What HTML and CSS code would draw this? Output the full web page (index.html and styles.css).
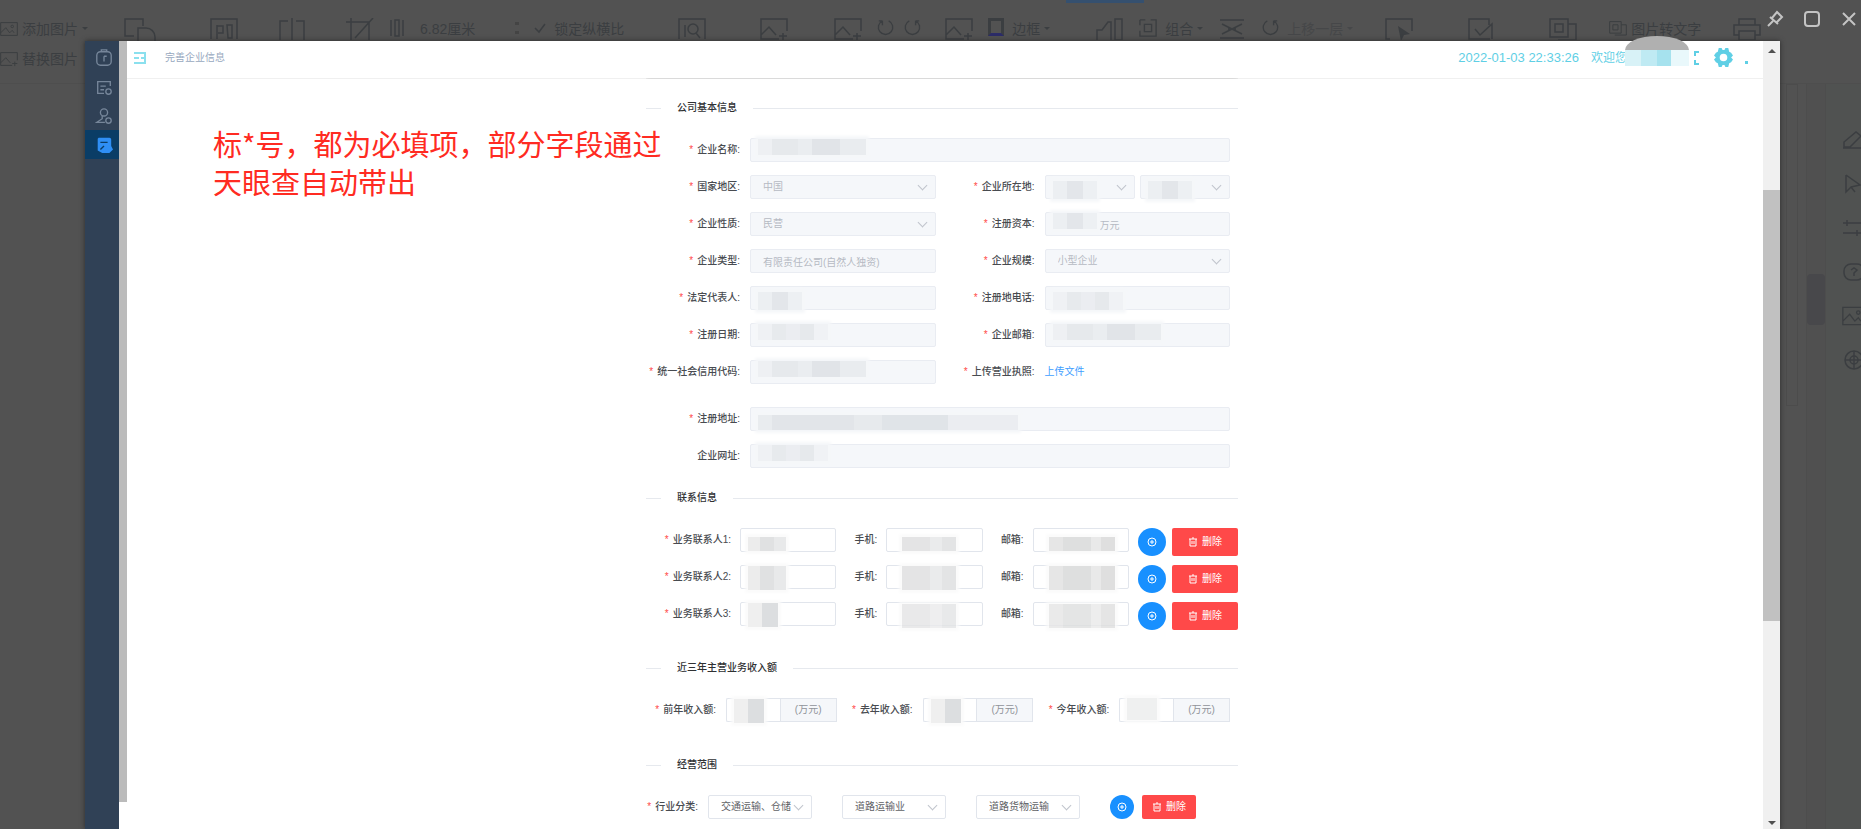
FILE: index.html
```html
<!DOCTYPE html>
<html lang="zh-CN">
<head>
<meta charset="utf-8">
<title>完善企业信息</title>
<link rel="stylesheet" href="styles.css">
</head>
<body>
<svg class="defs" aria-hidden="true">
  <symbol id="pic" viewBox="0 0 28 22"><path d="M1 1h26v20H1zM1 17l8-8 6 8 4-4 3 4"/><circle cx="19" cy="7" r="2"/></symbol>
  <symbol id="picplus" viewBox="0 0 28 22"><path d="M19 21H1V1h26v12M1 17l8-8 7 8M23 15v7M19 18h8"/></symbol>
  <symbol id="shape" viewBox="0 0 32 24"><path d="M10 18H1V1h18v7"/><path d="M14 24V10h8a9 9 0 0 1 9 9v5"/></symbol>
  <symbol id="fit" viewBox="0 0 28 22"><path d="M1 21V1h26v20M7 7v14M7 8h6v7H8M17 7h5v13h-4z"/></symbol>
  <symbol id="find" viewBox="0 0 28 22"><path d="M1 21V1h26v20"/><circle cx="15" cy="11" r="5"/><path d="M18 15l4 5M7 7v12"/></symbol>
  <symbol id="split" viewBox="0 0 28 22"><path d="M10 3H2v19M18 3h8v19M14 0v22"/></symbol>
  <symbol id="crop" viewBox="0 0 28 22"><path d="M5 0v22M0 4h23v18M27 0L9 20"/></symbol>
  <symbol id="bars" viewBox="0 0 16 18"><path d="M2 1v16M14 1v16M6 1h4v16H6z"/></symbol>
  <symbol id="check" viewBox="0 0 12 12"><path d="M1 6l4 4 6-8"/></symbol>
  <symbol id="rotl" viewBox="0 0 20 20"><path d="M13 2a8 8 0 1 1-7 0M6 2v5M2 2h4"/></symbol>
  <symbol id="rotr" viewBox="0 0 20 20"><path d="M7 2a8 8 0 1 0 7 0M14 2v5M18 2h-4"/></symbol>
  <symbol id="align" viewBox="0 0 28 22"><path d="M1 22V12h5l6-8h3v18M19 1h7v21h-7z"/></symbol>
  <symbol id="group" viewBox="0 0 20 20"><path d="M1 1h6M1 1v6M13 1h6v18H1v-6M6 6h8v8H6z"/></symbol>
  <symbol id="cursor" viewBox="0 0 28 22"><path d="M5 21H1V1h26v12"/><path class="solid" d="M13 8l12 8-6 1-3 6z"/></symbol>
  <symbol id="tick" viewBox="0 0 28 22"><path d="M23 21H2V1h20v6M8 11l5 6L25 6v15"/></symbol>
  <symbol id="layers" viewBox="0 0 28 22"><path d="M1 1h18v18H1zM19 6h8v16H9M6 6h8v8H6z"/></symbol>
  <symbol id="swap" viewBox="0 0 28 22"><path d="M2 2h24M2 20h24M4 6l20 10M24 6L4 16M10 11h8"/></symbol>
  <symbol id="print" viewBox="0 0 28 22"><path d="M6 7V1h16v6M6 17H1V7h26v10h-5M6 13h16v9H6z"/></symbol>
  <symbol id="doc" viewBox="0 0 20 20"><path d="M17 9V4H3v13h7M6 9h6M6 13h4"/><circle cx="15" cy="15" r="3"/></symbol>
  <symbol id="clip" viewBox="0 0 20 20"><rect x="2" y="3" width="16" height="15" rx="4"/><path d="M7 3V1h6v2M10 8v6M10 8h3"/></symbol>
  <symbol id="person" viewBox="0 0 20 20"><circle cx="10" cy="6" r="4"/><path d="M8 10v3l-6 4h9"/><circle cx="15" cy="15" r="3"/></symbol>
  <symbol id="docfill" viewBox="0 0 20 20"><path class="solid" d="M4 2h12a2 2 0 0 1 2 2v7l2 4-4 4h-8l-5-3V3z"/><path class="cut" d="M6 7h8M6 15l4-4"/></symbol>
  <symbol id="gear" viewBox="0 0 20 20"><path class="solid" fill-rule="evenodd" d="M5 0h3l1 2h2l1-2h3l1 4 2 1 2 3-2 2 2 2-2 3-2 1-1 4h-3l-1-2H9l-1 2H5l-1-4-2-1-2-3 2-2-2-2 2-3 2-1zM10 6a4 4 0 1 0 0 8 4 4 0 0 0 0-8z"/></symbol>
  <symbol id="trash" viewBox="0 0 10 10"><path d="M1 2h8M2 2v7h6V2M4 4v3M6 4v3M4 1h2"/></symbol>
  <symbol id="plus" viewBox="0 0 12 12"><circle cx="6" cy="6" r="4"/><path d="M6 4v4M4 6h4"/></symbol>
  <symbol id="pen" viewBox="0 0 24 20"><path d="M1 18h22M2 17v-5L14 2l5 4L8 17z"/></symbol>
  <symbol id="arrow" viewBox="0 0 24 20"><path d="M4 1v17l5-5 4 5M4 1l14 10-9 2"/></symbol>
  <symbol id="sliders" viewBox="0 0 24 20"><path d="M1 5h22M1 15h22M5 2v6M15 12v6"/></symbol>
  <symbol id="help" viewBox="0 0 24 20"><rect x="2" y="2" width="20" height="16" rx="7"/><path d="M9 8l3-2 3 2-3 3v3"/></symbol>
  <symbol id="web" viewBox="0 0 24 20"><circle cx="12" cy="10" r="9"/><circle cx="12" cy="10" r="4"/><path d="M3 10h18M12 1v18"/></symbol>
</svg>

<div class="desktop">
  <div class="ribbon">
    <div class="tab-marker"></div>
    <div class="stack">
      <span class="tool"><svg class="i18"><use href="#pic"/></svg>添加图片<i class="caret"></i></span>
      <span class="tool"><svg class="i18"><use href="#picplus"/></svg>替换图片</span>
    </div>
    <svg class="i32 s32"><use href="#shape"/></svg>
    <svg class="i28 s56"><use href="#fit"/></svg>
    <svg class="i28 s40"><use href="#split"/></svg>
    <svg class="i28 s40"><use href="#crop"/></svg>
    <svg class="i16 s16"><use href="#bars"/></svg>
    <span class="tool s16">6.82厘米</span>
    <span class="spinner s40"><i></i><i></i></span>
    <svg class="i12 s16"><use href="#check"/></svg>
    <span class="tool s8">锁定纵横比</span>
    <svg class="i28 s56"><use href="#find"/></svg>
    <svg class="i28 s56"><use href="#picplus"/></svg>
    <svg class="i28 s48"><use href="#picplus"/></svg>
    <svg class="i18 s16"><use href="#rotl"/></svg>
    <svg class="i18 s8"><use href="#rotr"/></svg>
    <svg class="i28 s24"><use href="#picplus"/></svg>
    <span class="border-icon s16"></span>
    <span class="tool s8">边框<i class="caret"></i></span>
    <svg class="i28 s48"><use href="#align"/></svg>
    <svg class="i18 s16"><use href="#group"/></svg>
    <span class="tool s8">组合<i class="caret"></i></span>
    <svg class="i28 s16"><use href="#swap"/></svg>
    <svg class="i18 s16"><use href="#rotr"/></svg>
    <span class="tool faint s8">上移一层<i class="caret"></i></span>
    <svg class="i28 s32"><use href="#cursor"/></svg>
    <svg class="i28 s56"><use href="#tick"/></svg>
    <svg class="i28 s56"><use href="#layers"/></svg>
    <svg class="i18 s32"><use href="#layers"/></svg>
    <span class="tool s4">图片转文字</span>
    <svg class="i28 s32"><use href="#print"/></svg>
  </div>
  <div class="workspace">
    <div class="doc-edge"></div>
    <div class="doc-scroll"><span class="doc-thumb"></span></div>
    <div class="rail">
      <svg><use href="#pen"/></svg><svg><use href="#arrow"/></svg><svg><use href="#sliders"/></svg>
      <svg><use href="#help"/></svg><svg><use href="#pic"/></svg><svg><use href="#web"/></svg>
    </div>
  </div>
</div>

<div class="viewer-controls">
  <button type="button" aria-label="固定"><svg viewBox="0 0 18 18"><path d="M2 16l5-5M4 7l8 7M6 8l5-6 5 5-5 5"/></svg></button>
  <button type="button" aria-label="最大化"><svg viewBox="0 0 18 18"><rect x="2" y="2" width="14" height="14" rx="3"/></svg></button>
  <button type="button" aria-label="关闭"><svg viewBox="0 0 18 18"><path d="M3 3l12 12M15 3L3 15"/></svg></button>
</div>

<div class="viewer">
  <nav class="side">
    <a href="#a" aria-label="首页"><svg><use href="#clip"/></svg></a>
    <a href="#b" aria-label="订单"><svg><use href="#doc"/></svg></a>
    <a href="#c" aria-label="用户"><svg><use href="#person"/></svg></a>
    <a href="#d" aria-label="企业" class="active"><svg><use href="#docfill"/></svg></a>
  </nav>
  <div class="strip"></div>
  <div class="page">
    <header class="head">
      <svg class="fold" viewBox="0 0 12 12"><path d="M0 1h12M0 6h5M0 11h12M11 1v10M7 6h4"/></svg>
      <span class="crumb">完善企业信息</span>
      <div class="user">
        <time>2022-01-03 22:33:26</time>
        <span class="hello">欢迎您<span class="cloak"><i class="cap"></i><i class="cells"></i></span></span>
        <svg class="bracket" viewBox="0 0 8 14"><path d="M6 1H2v4M2 9v4h4"/></svg>
        <svg class="gear"><use href="#gear"/></svg>
        <span class="dot"></span>
      </div>
    </header>
    <p class="note">标*号，都为必填项，部分字段通过<br>天眼查自动带出</p>
    <main>
    <form class="form">
      <h2>公司基本信息</h2>
      <div class="grid">
        <label class="req" for="f1">企业名称:</label>
        <div class="field wide"><input id="f1" disabled><i class="mosaic lg up"></i></div>
        <label class="req" for="f2">国家地区:</label>
        <div class="field pick"><select id="f2" disabled><option>中国</option></select></div>
        <label class="req" for="f3">企业所在地:</label>
        <div class="pair">
          <div class="field pick"><select id="f3" disabled><option></option></select><i class="mosaic sm"></i></div>
          <div class="field pick"><select aria-label="城市" disabled><option></option></select><i class="mosaic sm"></i></div>
        </div>
        <label class="req" for="f4">企业性质:</label>
        <div class="field pick"><select id="f4" disabled><option>民营</option></select></div>
        <label class="req" for="f5">注册资本:</label>
        <div class="field money"><input id="f5" disabled value="万元"><i class="mosaic sm up"></i></div>
        <label class="req" for="f6">企业类型:</label>
        <div class="field"><input id="f6" disabled value="有限责任公司(自然人独资)"></div>
        <label class="req" for="f7">企业规模:</label>
        <div class="field pick"><select id="f7" disabled><option>小型企业</option></select></div>
        <label class="req" for="f8">法定代表人:</label>
        <div class="field"><input id="f8" disabled><i class="mosaic sm"></i></div>
        <label class="req" for="f9">注册地电话:</label>
        <div class="field"><input id="f9" disabled><i class="mosaic md"></i></div>
        <label class="req" for="f10">注册日期:</label>
        <div class="field"><input id="f10" disabled><i class="mosaic md up"></i></div>
        <label class="req" for="f11">企业邮箱:</label>
        <div class="field"><input id="f11" disabled><i class="mosaic lg up"></i></div>
        <label class="req" for="f12">统一社会信用代码:</label>
        <div class="field"><input id="f12" disabled><i class="mosaic lg up"></i></div>
        <span class="label req">上传营业执照:</span>
        <a class="upload" href="#upload">上传文件</a>
      </div>
      <div class="grid second">
        <label class="req" for="f13">注册地址:</label>
        <div class="field wide"><input id="f13" disabled><i class="mosaic xl"></i></div>
        <label for="f14">企业网址:</label>
        <div class="field wide"><input id="f14" disabled><i class="mosaic md up"></i></div>
      </div>

      <h2>联系信息</h2>
      <div class="contact">
        <label class="req" for="c1">业务联系人1:</label><div class="field"><input id="c1"><i class="mosaic white sm"></i></div>
        <label for="p1">手机:</label><div class="field"><input id="p1"><i class="mosaic white md"></i></div>
        <label for="m1">邮箱:</label><div class="field"><input id="m1"><i class="mosaic white fill"></i></div>
        <div class="acts"><button type="button" class="add" aria-label="添加"><svg><use href="#plus"/></svg></button><button type="button" class="del"><svg><use href="#trash"/></svg>删除</button></div>
      </div>
      <div class="contact">
        <label class="req" for="c2">业务联系人2:</label><div class="field"><input id="c2"><i class="mosaic white sm tall"></i></div>
        <label for="p2">手机:</label><div class="field"><input id="p2"><i class="mosaic white md tall"></i></div>
        <label for="m2">邮箱:</label><div class="field"><input id="m2"><i class="mosaic white fill tall"></i></div>
        <div class="acts"><button type="button" class="add" aria-label="添加"><svg><use href="#plus"/></svg></button><button type="button" class="del"><svg><use href="#trash"/></svg>删除</button></div>
      </div>
      <div class="contact">
        <label class="req" for="c3">业务联系人3:</label><div class="field"><input id="c3"><i class="mosaic white xs tall"></i></div>
        <label for="p3">手机:</label><div class="field"><input id="p3"><i class="mosaic white md up"></i></div>
        <label for="m3">邮箱:</label><div class="field"><input id="m3"><i class="mosaic white fill up"></i></div>
        <div class="acts"><button type="button" class="add" aria-label="添加"><svg><use href="#plus"/></svg></button><button type="button" class="del"><svg><use href="#trash"/></svg>删除</button></div>
      </div>

      <h2 class="spaced">近三年主营业务收入额</h2>
      <div class="revenue">
        <label class="req" for="r1">前年收入额:</label><div class="field unit"><input id="r1"><span>(万元)</span><i class="mosaic white xs tall"></i></div>
        <label class="req" for="r2">去年收入额:</label><div class="field unit"><input id="r2"><span>(万元)</span><i class="mosaic white xs tall"></i></div>
        <label class="req" for="r3">今年收入额:</label><div class="field unit"><input id="r3"><span>(万元)</span><i class="mosaic white xs pale"></i></div>
      </div>

      <h2 class="spaced more">经营范围</h2>
      <div class="industry">
        <label class="req" for="s1">行业分类:</label>
        <div class="selects">
          <div class="field pick"><select id="s1"><option>交通运输、仓储</option></select></div>
          <div class="field pick"><select aria-label="行业中类"><option>道路运输业</option></select></div>
          <div class="field pick"><select aria-label="行业小类"><option>道路货物运输</option></select></div>
          <div class="acts small"><button type="button" class="add" aria-label="添加"><svg><use href="#plus"/></svg></button><button type="button" class="del"><svg><use href="#trash"/></svg>删除</button></div>
        </div>
      </div>
    </form>
    </main>
  </div>
  <div class="scroll"><i class="up-arrow"></i><span class="thumb"></span><i class="down-arrow"></i></div>
</div>
</body>
</html>
```
FILE: styles.css
```css
* { box-sizing: border-box; }
body {
  margin: 0;
  height: 100vh;
  overflow: hidden;
  position: relative;
  background: #525252;
  font: 10px/16px "Liberation Sans", "Noto Sans CJK SC", sans-serif;
  color: #606266;
}
svg { fill: none; stroke: currentColor; stroke-width: 2; flex: none; display: block; }
.solid { fill: currentColor; stroke: none; }
.cut { stroke: #0a3d66; }
.defs { position: absolute; width: 0; height: 0; }

/* editor behind the viewer */
.desktop { height: 100%; display: flex; flex-direction: column; color: #3b3e41; }
.ribbon {
  position: relative;
  height: 84px;
  flex: none;
  display: flex;
  align-items: flex-start;
  padding-top: 18px;
  border-bottom: 1px solid #4e4e4e;
  white-space: nowrap;
}
.ribbon svg { stroke-width: 1.5; }
.tab-marker { position: absolute; top: 0; left: 57.3%; width: 78px; height: 3px; background: #35506f; }
.stack { display: flex; flex-direction: column; gap: 8px; width: 92px; }
.tool { display: flex; align-items: center; gap: 4px; font-size: 14px; line-height: 22px; }
.faint { opacity: .5; }
.caret { border: 3px solid transparent; border-top-color: currentColor; margin-top: 2px; }
.i32 { width: 32px; height: 24px; }
.i28 { width: 28px; height: 22px; }
.i18 { width: 18px; height: 20px; }
.i16 { width: 16px; height: 20px; }
.i12 { width: 12px; height: 20px; }
.s4 { margin-left: 4px; }
.s8 { margin-left: 8px; }
.s16 { margin-left: 15px; }
.s24 { margin-left: 24px; }
.s32 { margin-left: 32px; }
.s40 { margin-left: 40px; }
.s48 { margin-left: 46px; }
.s56 { margin-left: 54px; }
.spinner { display: flex; flex-direction: column; gap: 6px; padding-top: 4px; }
.spinner i { width: 4px; height: 3px; background: #444; }
.border-icon { width: 16px; height: 18px; border: 3px solid #3b3e41; border-bottom-color: #2c2c68; }
.workspace { flex: 1; display: flex; justify-content: flex-end; }
.doc-edge { width: 12px; height: 322px; margin-right: 8px; border: 1px solid #4c4c4c; }
.doc-scroll { width: 20px; background: #505050; border: solid #4d4d4d; border-width: 0 1px; padding-top: 190px; }
.doc-thumb { display: block; height: 51px; background: #48484b; border-radius: 4px; }
.rail { width: 35px; overflow: hidden; display: flex; flex-direction: column; gap: 24px; padding: 46px 0 0 16px; background: #505251; }
.rail svg { width: 24px; height: 20px; stroke-width: 1.5; }

.viewer-controls { position: absolute; top: 10px; right: 3px; display: flex; gap: 19px; }
.viewer-controls button { width: 18px; height: 18px; padding: 0; border: 0; background: none; color: #c4c4c4; }

/* viewer window */
.viewer {
  position: absolute;
  inset: 41px 81px 0 85px;
  display: grid;
  grid-template-columns: 34px 8px 1fr 17px;
  background: #fff;
  box-shadow: 0 0 5px #2b2b2b;
}
.side { background: #304156; color: #76869a; padding-top: 2px; }
.side a { height: 29px; display: grid; place-items: center; padding-left: 4px; color: inherit; }
.side svg { width: 18px; height: 18px; stroke-width: 1.5; }
.side .active { background: #0a3d66; color: #2f8ff5; }
.strip { background: #bbb; margin-bottom: 27px; }
.page { position: relative; min-width: 0; }
.head {
  height: 38px;
  display: flex;
  align-items: center;
  padding: 0 15px 4px 7px;
  border-bottom: 1px solid #f0f0f0;
  color: #5fcfe5;
}
.fold { width: 12px; height: 12px; color: #8be0ee; }
.crumb { margin-left: 19px; color: #97a8be; }
.user { margin-left: auto; display: flex; align-items: center; font-size: 13px; }
.hello { position: relative; display: flex; margin-left: 12px; font-size: 12px; }
.cloak { position: relative; width: 64px; height: 16px; margin-left: -2px; }
.cap { position: absolute; left: 0; top: -14px; width: 64px; height: 14px; border-radius: 32px 32px 0 0 / 14px 14px 0 0; background: #b0b0b0; }
.cells { position: absolute; inset: 0; background: linear-gradient(90deg, #d8f2f7 0 16px, #bfeaf3 16px 32px, #a6e2ee 32px 46px, #e9f8fb 46px); }
.bracket { width: 8px; height: 14px; margin-left: 4px; }
.gear { width: 19px; height: 19px; margin-left: 13px; }
.dot { width: 3px; height: 3px; margin: 10px 0 0 12px; background: currentColor; }
.note {
  position: absolute;
  left: 86px;
  top: 83px;
  margin: 0;
  font: 29px/38px "Noto Sans CJK SC", sans-serif;
  color: #ff2b22;
}

/* form */
main { padding-right: 6px; }
.form { width: 592px; max-width: 100%; margin: 0 auto; padding-top: 21px; box-shadow: 0 -1px 4px #ccc; clip-path: inset(-1px 0 0 0); }
h2 { display: flex; align-items: center; gap: 16px; margin: 22px 0; font: inherit; font-weight: 500; color: #303133; }
h2:first-child { margin-top: 0; }
h2::before, h2::after { content: ""; height: 1px; background: #e6e9ee; }
h2::before { width: 15px; }
h2::after { flex: 1; }
h2.spaced { margin-top: 30px; }
h2.more { margin-top: 35px; }
.grid { display: grid; grid-template-columns: 94px 1fr 89px 1fr; gap: 13px 10px; align-items: center; padding-right: 8px; }
.second { margin-top: 23px; }
.wide { grid-column: span 3; }
label, .label { text-align: right; white-space: nowrap; color: #484b50; font-weight: 500; }
.req::before { content: "*"; color: #ff4949; margin-right: 4px; }
.field { position: relative; display: flex; height: 24px; min-width: 0; }
.pair { display: grid; grid-template-columns: 1fr 1fr; gap: 5px; }
input, select {
  width: 100%;
  min-width: 0;
  height: 24px;
  margin: 0;
  padding: 0 12px;
  border: 1px solid #e1e5ec;
  border-radius: 2px;
  background: #fff;
  color: #606266;
  font: inherit;
  appearance: none;
}
input:disabled, select:disabled { background: #f5f7fa; border-color: #e9ecf2; color: #b5bac3; opacity: 1; }
.money input { padding-left: 54px; }
.pick::after {
  content: "";
  position: absolute;
  right: 10px;
  top: 7px;
  width: 6px;
  height: 6px;
  border: solid #c0c4cc;
  border-width: 0 1px 1px 0;
  transform: rotate(45deg);
}
.upload { color: #409eff; text-decoration: none; }

/* pixelated patches over private values */
.mosaic {
  position: absolute;
  left: 8px;
  top: 6px;
  width: 44px;
  height: 18px;
  background: linear-gradient(90deg, #eceff2 0 14px, #e3e6ea 14px 30px, #edf0f3 30px);
  box-shadow: 0 0 3px 3px #f5f7f9;
}
.up { top: 1px; height: 16px; }
.md { width: 70px; background: linear-gradient(90deg, #eff1f4 0 14px, #e7eaed 14px 28px, #ebedf1 28px 42px, #e6e9ec 42px 56px, #f0f2f5 56px); }
.lg { width: 108px; background: linear-gradient(90deg, #eef0f3 0 14px, #e6e9ec 14px 40px, #eaedf0 40px 54px, #e1e4e8 54px 82px, #e9ecef 82px); }
.xl { width: 260px; top: 8px; height: 15px; background: linear-gradient(90deg, #e9ecef 0 14px, #e2e5e9 14px 96px, #e7eaed 96px 124px, #e0e4e8 124px 190px, #ebedf1 190px); }
.xs { width: 30px; background: linear-gradient(90deg, #efefef 0 14px, #dcdee0 14px); }
.white { box-shadow: 0 0 3px 3px #fbfbfb; top: 9px; height: 14px; }
.white.sm { background: linear-gradient(90deg, #ececec 0 12px, #e0e1e2 12px 26px, #e8e9ea 26px); width: 38px; }
.white.md { left: 16px; width: 54px; background: linear-gradient(90deg, #e4e4e5 0 28px, #eaebec 28px 40px, #e3e4e5 40px); }
.white.fill { left: 16px; width: 66px; background: linear-gradient(90deg, #e6e6e6 0 14px, #dedfdf 14px 42px, #e9e9e9 42px 52px, #dfdfdf 52px); }
.white.tall { top: 1px; height: 24px; }
.white.up { top: 2px; height: 24px; opacity: .8; }
.white.pale { top: 0; height: 22px; background: #eff0f0; }

.contact { display: grid; grid-template-columns: 85px 1fr 32px 1fr 32px 1fr 100px; gap: 9px; align-items: start; line-height: 24px; margin-bottom: 9px; }
.acts { display: flex; gap: 6px; }
.acts button { height: 28px; padding: 0; border: 0; color: #fff; font: inherit; }
.acts .add { width: 28px; border-radius: 50%; background: #1890ff; display: grid; place-items: center; }
.add svg { width: 12px; height: 12px; stroke-width: 1; }
.acts .del { width: 66px; border-radius: 2px; background: #ff4949; display: flex; align-items: center; justify-content: center; gap: 4px; }
.del svg { width: 10px; height: 10px; stroke-width: 1; }
.revenue { display: grid; grid-template-columns: 70px 1fr 66px 1fr 66px 1fr; gap: 10px; align-items: center; padding-right: 8px; }
.unit input { border-radius: 2px 0 0 2px; border-right: 0; }
.unit span { flex: none; width: 57px; border: 1px solid #e1e5ec; background: #f5f7fa; color: #909399; line-height: 22px; text-align: center; }
.industry { display: flex; align-items: center; gap: 10px; }
.industry label { width: 52px; }
.selects { display: flex; gap: 30px; }
.industry .field { width: 104px; }
.acts.small { gap: 8px; }
.small button { height: 24px; }
.small .add { width: 24px; }
.small .del { width: 54px; }
.acts.small button { height: 24px; }
.acts.small .add { width: 24px; }
.acts.small .del { width: 54px; }

/* page scrollbar */
.scroll { background: #f0f0f0; display: flex; flex-direction: column; align-items: center; padding-top: 4px; }
.scroll i { border: 4px solid transparent; }
.scroll .up-arrow { border-bottom-color: #505050; }
.scroll .down-arrow { border-top-color: #505050; margin-top: auto; }
.thumb { width: 100%; height: 55%; margin-top: 137px; background: #c1c1c1; }
```
